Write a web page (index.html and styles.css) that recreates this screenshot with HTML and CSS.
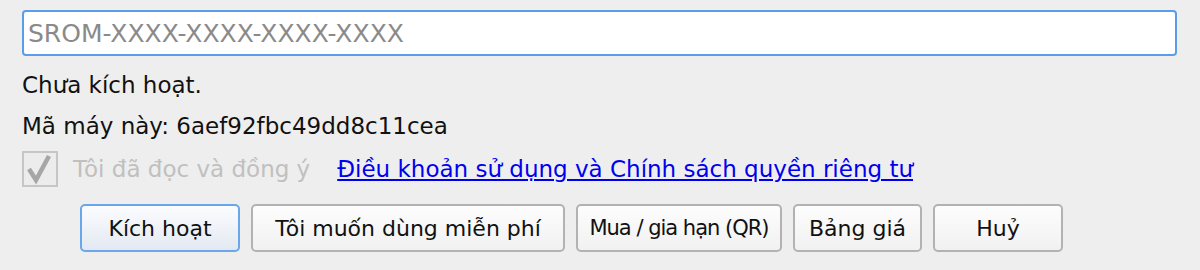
FILE: index.html
```html
<!DOCTYPE html>
<html lang="vi">
<head>
  <meta charset="UTF-8" />
  <title>Kích hoạt</title>
  <link rel="stylesheet" href="styles.css">
</head>
<body>

  <div class="dialog">
    <input class="key-input" type="text" placeholder="SROM-XXXX-XXXX-XXXX-XXXX" autofocus />

    <div class="status">Chưa kích hoạt.</div>
    <div class="machine">Mã máy này: 6aef92fbc49dd8c11cea</div>

    <div class="agree">
      <span class="check">
        <svg width="36" height="36" viewBox="0 0 36 36">
          <rect x="1" y="1" width="34" height="34" fill="#ececec" stroke="#c6c6c6" stroke-width="2"/>
          <path d="M7 18 L14 29 L27 5" fill="none" stroke="#a6a6a6" stroke-width="4.5" stroke-linejoin="miter"/>
        </svg>
      </span>
      <span class="agree-text">Tôi đã đọc và đồng ý</span>
      <a class="terms" href="#">Điều khoản sử dụng và Chính sách quyền riêng tư</a>
    </div>

    <div class="buttons">
      <button class="btn default b1">Kích hoạt</button>
      <button class="btn b2">Tôi muốn dùng miễn phí</button>
      <button class="btn b3">Mua / gia hạn (QR)</button>
      <button class="btn b4">Bảng giá</button>
      <button class="btn b5">Huỷ</button>
    </div>
  </div>

</body>
</html>
```

FILE: styles.css
```css
body {
  margin: 0;
  padding: 0;
  background-color: #eeeeee;
  font-family: "DejaVu Sans", "Liberation Sans", sans-serif;
  color: #111;
  overflow: hidden;
}

.dialog {
  padding: 10px 23px 0 22px;
  display: flex;
  flex-direction: column;
}

.key-input {
  box-sizing: border-box;
  width: 100%;
  height: 46px;
  border: 2px solid #5b9de9;
  border-radius: 4px;
  background: #fff;
  padding: 0 4px;
  font-family: inherit;
  font-size: 25px;
  color: #222;
  caret-color: #111;
  outline: none;
}

.key-input::placeholder {
  color: #8a8a8a;
}

.status {
  margin-top: 15px;
  font-size: 23px;
  line-height: 28px;
}

.machine {
  margin-top: 13px;
  font-size: 23px;
  line-height: 28px;
}

.agree {
  display: flex;
  align-items: center;
  margin-top: 11px;
  height: 36px;
}

.check {
  display: flex;
  width: 36px;
  height: 36px;
}

.agree-text {
  margin-left: 15px;
  font-size: 23px;
  color: #c0c0c0;
}

.terms {
  margin-left: 27px;
  font-size: 23px;
  color: #0000ee;
}

.buttons {
  display: flex;
  gap: 11px;
  margin-top: 17px;
  margin-left: 58px;
}

.btn {
  box-sizing: border-box;
  height: 48px;
  border: 2px solid #b2b2b2;
  border-radius: 5px;
  background: linear-gradient(#fdfdfd, #f1f1f1);
  font-family: inherit;
  font-size: 22px;
  color: #111;
  padding: 0;
  white-space: nowrap;
}

.btn.default {
  border-color: #6aa6eb;
  background: linear-gradient(#fbfcfe, #e3e9f2);
}

.b1 { width: 160px; }
.b2 { width: 314px; }
.b3 { width: 206px; font-size: 21px; letter-spacing: -1px; }
.b4 { width: 129px; }
.b5 { width: 130px; }
```
